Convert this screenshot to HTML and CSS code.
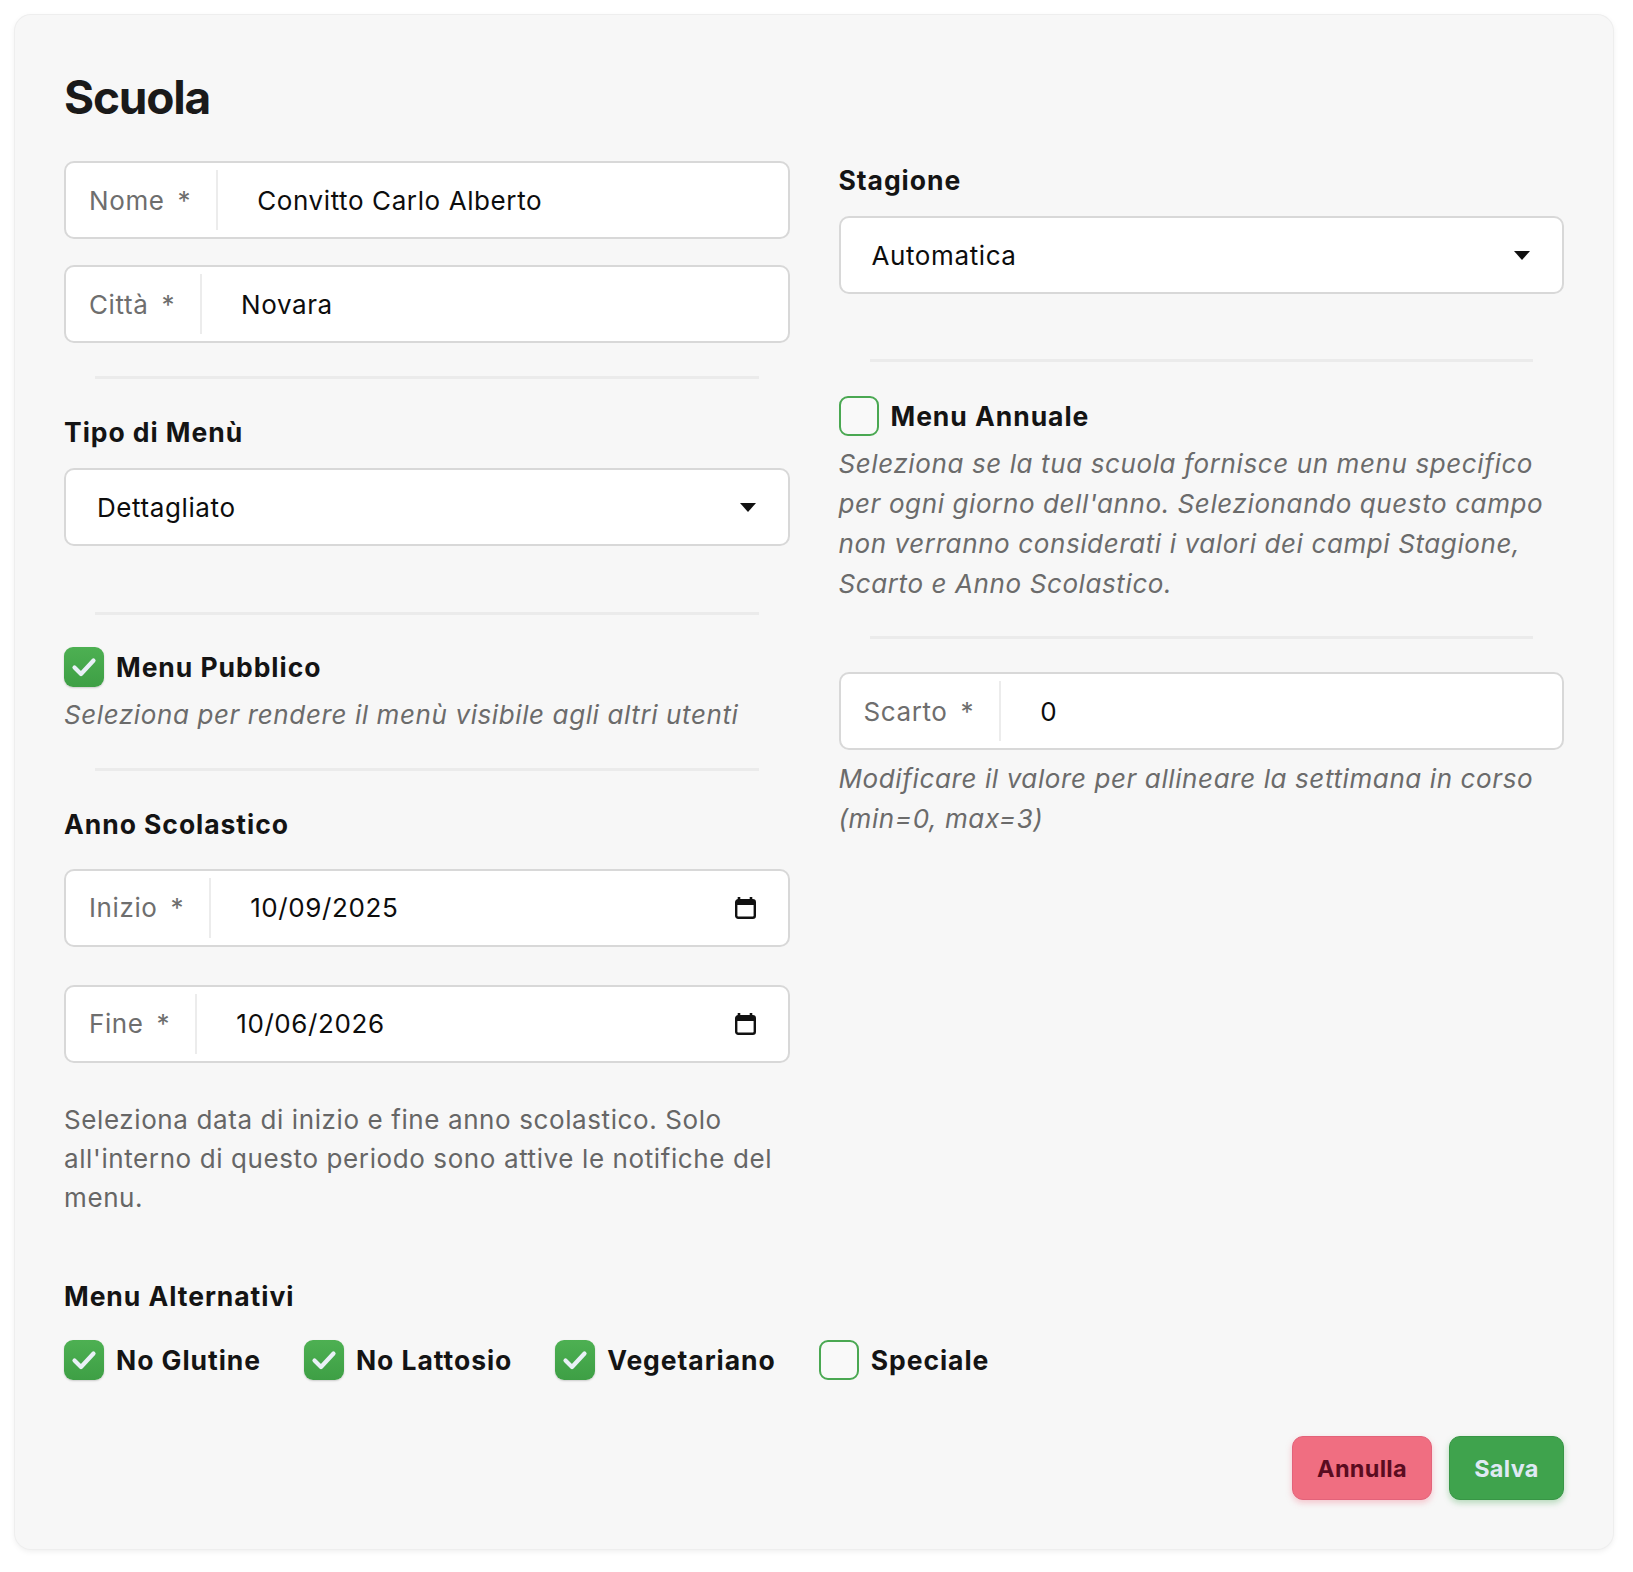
FILE: index.html
```html
<!DOCTYPE html>
<html lang="it">
<head>
<meta charset="utf-8">
<title>Scuola</title>
<link rel="stylesheet" href="styles.css">
</head>
<body>
<div class="page">
  <div class="card">
    <h1 class="title">Scuola</h1>
    <div class="cols">
      <div class="col">
        <div class="field">
          <span class="addon-label">Nome<span class="req">*</span></span>
          <span class="addon-value">Convitto Carlo Alberto</span>
        </div>
        <div class="field field-gap">
          <span class="addon-label">Città<span class="req">*</span></span>
          <span class="addon-value">Novara</span>
        </div>
        <div class="sep sep-a"></div>
        <div class="label">Tipo di Menù</div>
        <div class="select">
          <span>Dettagliato</span>
          <svg class="caret" width="16" height="9" viewBox="0 0 16 9"><path d="M0 0H16L8 9Z" fill="#111"/></svg>
        </div>
        <div class="sep sep-b"></div>
        <div class="check">
          <span class="box on"><svg width="40" height="40" viewBox="0 0 40 40"><path d="M10.5 20.5L17 27L29.5 13.5" fill="none" stroke="#e9f0f7" stroke-width="4.2" stroke-linecap="round" stroke-linejoin="round"/></svg></span>
          <span>Menu Pubblico</span>
        </div>
        <p class="help">Seleziona per rendere il menù visibile agli altri utenti</p>
        <div class="sep sep-c"></div>
        <div class="label">Anno Scolastico</div>
        <div class="field date date-first">
          <span class="addon-label">Inizio<span class="req">*</span></span>
          <span class="addon-value">10/09/2025</span>
          <svg class="cal" width="23" height="24" viewBox="0 0 23 24"><path d="M5 1V6M17 1V6" stroke="#111" stroke-width="2.6" stroke-linecap="butt"/><rect x="2.2" y="4.2" width="18.6" height="17.6" rx="2" fill="none" stroke="#111" stroke-width="2.4"/><rect x="2" y="4" width="19" height="5" fill="#111"/></svg>
        </div>
        <div class="field date date-second">
          <span class="addon-label">Fine<span class="req">*</span></span>
          <span class="addon-value">10/06/2026</span>
          <svg class="cal" width="23" height="24" viewBox="0 0 23 24"><path d="M5 1V6M17 1V6" stroke="#111" stroke-width="2.6" stroke-linecap="butt"/><rect x="2.2" y="4.2" width="18.6" height="17.6" rx="2" fill="none" stroke="#111" stroke-width="2.4"/><rect x="2" y="4" width="19" height="5" fill="#111"/></svg>
        </div>
        <p class="note">Seleziona data di inizio e fine anno scolastico. Solo all'interno di questo periodo sono attive le notifiche del menu.</p>
      </div>
      <div class="col">
        <div class="label">Stagione</div>
        <div class="select">
          <span>Automatica</span>
          <svg class="caret" width="16" height="9" viewBox="0 0 16 9"><path d="M0 0H16L8 9Z" fill="#111"/></svg>
        </div>
        <div class="sep sep-d"></div>
        <div class="check">
          <span class="box off"></span>
          <span>Menu Annuale</span>
        </div>
        <p class="help help-top">Seleziona se la tua scuola fornisce un menu specifico per ogni giorno dell'anno. Selezionando questo campo non verranno considerati i valori dei campi Stagione, Scarto e Anno Scolastico.</p>
        <div class="sep sep-e"></div>
        <div class="field">
          <span class="addon-label">Scarto<span class="req">*</span></span>
          <span class="addon-value">0</span>
        </div>
        <p class="help help-scarto">Modificare il valore per allineare la settimana in corso (min=0, max=3)</p>
      </div>
    </div>
    <div class="label alt-label">Menu Alternativi</div>
    <div class="alts">
      <div class="check">
        <span class="box on"><svg width="40" height="40" viewBox="0 0 40 40"><path d="M10.5 20.5L17 27L29.5 13.5" fill="none" stroke="#e9f0f7" stroke-width="4.2" stroke-linecap="round" stroke-linejoin="round"/></svg></span>
        <span>No Glutine</span>
      </div>
      <div class="check">
        <span class="box on"><svg width="40" height="40" viewBox="0 0 40 40"><path d="M10.5 20.5L17 27L29.5 13.5" fill="none" stroke="#e9f0f7" stroke-width="4.2" stroke-linecap="round" stroke-linejoin="round"/></svg></span>
        <span>No Lattosio</span>
      </div>
      <div class="check">
        <span class="box on"><svg width="40" height="40" viewBox="0 0 40 40"><path d="M10.5 20.5L17 27L29.5 13.5" fill="none" stroke="#e9f0f7" stroke-width="4.2" stroke-linecap="round" stroke-linejoin="round"/></svg></span>
        <span>Vegetariano</span>
      </div>
      <div class="check">
        <span class="box off"></span>
        <span>Speciale</span>
      </div>
    </div>
    <div class="actions">
      <button class="btn btn-cancel">Annulla</button>
      <button class="btn btn-save">Salva</button>
    </div>
  </div>
</div>
</body>
</html>
```
FILE: styles.css
```css
* { box-sizing: border-box; }
html, body { margin: 0; padding: 0; background: #ffffff; }
body {
  font-family: Inter, "Noto Sans", "Liberation Sans", sans-serif;
  font-size: 26px;
  letter-spacing: 0.6px;
  color: #141414;
}
.page { padding: 15px 20px 24px 15px; }
.card {
  background: #f7f7f7;
  border-radius: 16px;
  box-shadow: 0 0 0 1px #eeeeee, 0 2px 6px rgba(0, 0, 0, 0.08);
  padding: 54px 49px 49px 49px;
}
.title {
  margin: 0;
  font-size: 46px;
  line-height: 56px;
  font-weight: 700;
  letter-spacing: -1.2px;
  color: #1a1a1a;
}
.cols {
  display: grid;
  grid-template-columns: 1fr 1fr;
  column-gap: 49px;
  margin-top: 36px;
  align-items: start;
}
.label {
  font-size: 26.5px;
  font-weight: 700;
  letter-spacing: 0.95px;
  line-height: 38.4px;
  color: #141414;
}
.field {
  display: flex;
  align-items: stretch;
  height: 78px;
  background: #ffffff;
  border: 2px solid #d8d8d8;
  border-radius: 10px;
}
.field-gap { margin-top: 26px; }
.addon-label {
  display: flex;
  align-items: center;
  margin: 7px 0;
  padding: 0 25px 0 23px;
  border-right: 2px solid #ececec;
  color: #6e6e6e;
  white-space: nowrap;
}
.req { margin-left: 13px; }
.addon-value {
  display: flex;
  align-items: center;
  flex: 1;
  padding-left: 39px;
  color: #0d0d0d;
}
.date { padding-right: 31px; align-items: center; }
.date .addon-label { align-self: stretch; }
.date .addon-value { align-self: stretch; }
.cal { flex: none; }
.date-first { margin-top: 25px; }
.date-second { margin-top: 38px; }
.select {
  display: flex;
  align-items: center;
  justify-content: space-between;
  height: 78px;
  margin-top: 17px;
  padding: 0 32px 0 31px;
  background: #ffffff;
  border: 2px solid #d8d8d8;
  border-radius: 10px;
  color: #0d0d0d;
}
.sep {
  height: 3px;
  background: #ebebeb;
  margin: 0 31px;
}
.sep-a { margin-top: 33px; margin-bottom: 34px; }
.sep-b { margin-top: 66px; margin-bottom: 32px; }
.sep-c { margin-top: 33px; margin-bottom: 34px; }
.sep-d { margin-top: 65px; margin-bottom: 34px; }
.sep-e { margin-top: 32px; margin-bottom: 33px; }
.check {
  display: flex;
  align-items: center;
  gap: 12px;
  font-size: 26.5px;
  font-weight: 700;
  letter-spacing: 0.95px;
  line-height: 38.4px;
  color: #141414;
}
.box {
  width: 40px;
  height: 40px;
  flex: none;
  border-radius: 9px;
  display: block;
}
.box svg { display: block; }
.box.on {
  background: linear-gradient(#4db052, #3e9f45);
  box-shadow: 0 1px 2px rgba(0, 0, 0, 0.18);
}
.box.off {
  border: 2px solid #4aa852;
  background: #f9f9f9;
}
.help {
  margin: 8px 0 0 0;
  font-style: italic;
  line-height: 40px;
  color: #6b6b6b;
}
.help-top { margin-top: 8px; }
.help-scarto { margin-top: 9px; }
.note {
  margin: 37px 0 0 0;
  line-height: 39px;
  color: #666666;
}
.alt-label { margin-top: 60px; }
.alts {
  display: flex;
  gap: 43px;
  margin-top: 25px;
}
.actions {
  display: flex;
  justify-content: flex-end;
  gap: 17px;
  margin-top: 56px;
}
.btn {
  height: 64px;
  padding: 0 20px;
  border-radius: 11px;
  font-family: Inter, "Noto Sans", sans-serif;
  font-size: 23.5px;
  font-weight: 700;
  letter-spacing: 0.3px;
  cursor: pointer;
}
.btn-cancel {
  background: #f06e81;
  border: 1px solid #e3637a;
  color: #5a0c20;
  box-shadow: 0 3px 6px rgba(240, 110, 129, 0.35);
  width: 140px;
}
.btn-save {
  background: #3fa34d;
  border: 1px solid #389646;
  color: #dfe9f4;
  box-shadow: 0 3px 6px rgba(63, 163, 77, 0.35);
  width: 115px;
}
```
